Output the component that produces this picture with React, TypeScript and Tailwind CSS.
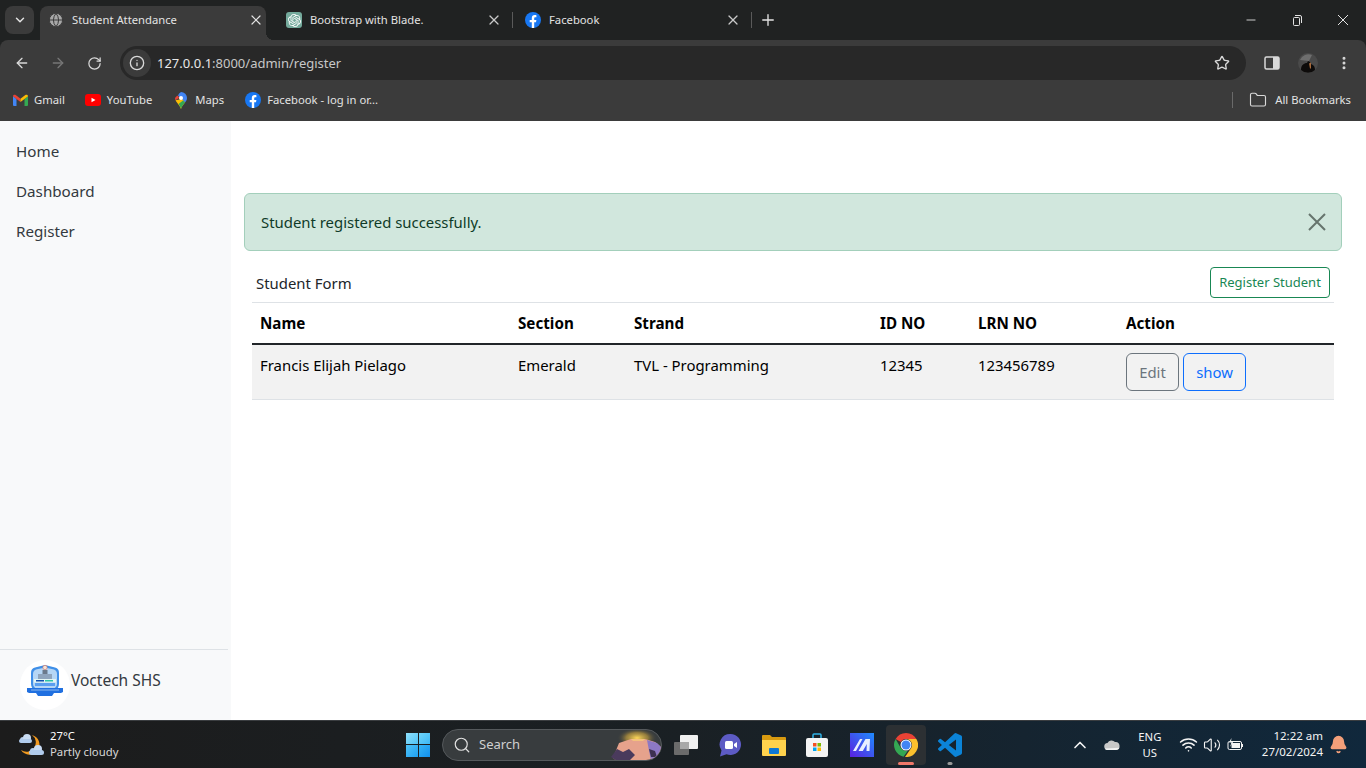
import { ArrowLeft, ArrowRight, RotateCw, Info, Star, X, Plus, ChevronDown, Minus, Search, Folder, ChevronUp, Volume2, Bell, Globe, EllipsisVertical, Wifi } from 'lucide-react';
import { SiOpenai } from 'react-icons/si';

const FONT = "font-['Noto_Sans',sans-serif]";

const FacebookIcon = () => (
  <svg width="16" height="16" viewBox="0 0 16 16" className="shrink-0">
    <circle cx="8" cy="8" r="8" fill="#1877f2" />
    <path d="M11 10.2l.4-2.3H9.2V6.400c0-.7.3-1.200 1.200-1.200h1V3.200S10.500 3 9.700 3C7.900 3 6.800 4.100 6.800 6.100v1.800H4.700v2.300h2.100V16h2.400v-5.800z" fill="#fff" />
  </svg>
);

const GptIcon = () => (
  <span className="flex h-4 w-4 shrink-0 items-center justify-center rounded-[3px] bg-[#74aa9c] text-white">
    <SiOpenai size={13} />
  </span>
);

const GmailIcon = () => (
  <svg width="15" height="12" viewBox="0 0 15 12" className="shrink-0">
    <path d="M0 2v9a1 1 0 0 0 1 1h2.500V5z" fill="#4285f4" />
    <path d="M15 2v9a1 1 0 0 1-1 1h-2.500V5z" fill="#34a853" />
    <path d="M0 2.200 3.500 5 7.500 8V4.800L3 1.200C1.600.2 0 .8 0 2.200z" fill="#ea4335" />
    <path d="M15 2.200 11.500 5 7.500 8V4.800L12 1.200c1.400-1 3-.4 3 1z" fill="#fbbc04" />
  </svg>
);

const YoutubeIcon = () => (
  <svg width="16" height="12" viewBox="0 0 16 12" className="shrink-0">
    <rect width="16" height="12" rx="3" fill="#f00" />
    <path d="M6.500 3.700v4.600L10.500 6z" fill="#fff" />
  </svg>
);

const MapsIcon = () => (
  <svg width="12" height="17" viewBox="0 0 12 17" className="shrink-0">
    <path d="M6 0a6 6 0 0 1 6 6c0 2-1 3.300-2 4.600L3 3.500A6 6 0 0 1 6 0z" fill="#4285f4" />
    <path d="M3 3.500A5.800 5.800 0 0 0 0 6c0 .8.200 1.600.500 2.200L4 6z" fill="#ea4335" />
    <path d="M.5 8.200C1.500 10.500 4.500 13 6 17c.7-2.500 2.500-4.500 4-6.400L7 7z" fill="#fbbc04" />
    <path d="M3.500 12C4.500 13.400 5.500 15 6 17c.7-2.500 2.500-4.500 4-6.400L8 8.500z" fill="#34a853" />
    <circle cx="6" cy="6" r="2" fill="#fff" />
  </svg>
);

const Tab = ({ icon, title }: { icon: React.ReactNode; title: string }) => (
  <div className="mb-[6px] flex h-7 w-[216px] items-center text-[11.25px] text-[#e3e3e3]">
    {icon}
    <span className="ml-2 flex-1 truncate">{title}</span>
    <X size={16} strokeWidth={1.800} className="text-[#c9c9c9]" />
  </div>
);

const Bookmark = ({ icon, label, className }: { icon: React.ReactNode; label: string; className: string }) => (
  <div className={`flex items-center ${className}`}>
    {icon}
    <span className="text-[11.25px] text-[#e3e3e3]">{label}</span>
  </div>
);

const BrowserChrome = () => (
  <header className="shrink-0 bg-[#202222]">
    <div className="flex h-10 items-end pl-[5px]">
      <div className="mb-[6px] flex h-7 w-[29px] items-center justify-center rounded-lg bg-[#3b3b3b]">
        <ChevronDown size={14} strokeWidth={2.500} className="text-[#e3e3e3]" />
      </div>
      <div className="relative ml-[6px] flex h-[34px] w-[226px] items-center rounded-t-lg bg-[#3b3b3b] pb-[6px] pl-2 pr-[2px] text-[11.25px] text-[#e3e3e3]">
        <Globe size={16} fill="#a8a8a8" stroke="#3b3b3b" strokeWidth={1.500} className="shrink-0" />
        <span className="ml-2 flex-1 truncate">Student Attendance</span>
        <X size={16} strokeWidth={1.800} className="text-[#e3e3e3]" />
        <span className="absolute bottom-0 right-[-8px] h-2 w-2 bg-[radial-gradient(circle_at_100%_0,transparent_8px,#3b3b3b_8px)]" />
      </div>
      <div className="ml-5">
        <Tab icon={<GptIcon />} title="Bootstrap with Blade." />
      </div>
      <div className="mb-[12px] ml-[10px] h-[16px] border-l border-[#5a5a5a]" />
      <div className="ml-[12px]">
        <Tab icon={<FacebookIcon />} title="Facebook" />
      </div>
      <div className="mb-[12px] ml-[10px] h-[16px] border-l border-[#5a5a5a]" />
      <div className="mb-[11px] ml-[7px]">
        <Plus size={18} strokeWidth={1.800} className="text-[#e3e3e3]" />
      </div>
      <div className="ml-auto flex h-full items-center text-[#e3e3e3]">
        <div className="flex w-[46px] justify-center"><Minus size={14} strokeWidth={1.500} /></div>
        <div className="flex w-[46px] justify-center">
          <svg width="11" height="12" viewBox="0 0 11 12" fill="none" stroke="currentColor">
            <rect x="1.500" y="3.500" width="6" height="8" rx="1" />
            <path d="M3 1.500h5a1.500 1.500 0 0 1 1.500 1.500v6" />
          </svg>
        </div>
        <div className="flex w-[46px] justify-center">
          <svg width="12" height="12" viewBox="0 0 12 12" stroke="currentColor"><path d="M1 1l10 10M11 1L1 11" /></svg>
        </div>
      </div>
    </div>
    <div className="flex h-[44px] items-center rounded-t-lg bg-[#3b3b3b] pt-[2px] text-[#d9d9d9]">
      <ArrowLeft size={16} strokeWidth={2} className="ml-[14px]" />
      <ArrowRight size={16} strokeWidth={2} className="ml-5 text-[#777]" />
      <RotateCw size={15} strokeWidth={2} className="ml-[21px]" />
      <div className="ml-[18px] flex h-[34px] w-[1126px] items-center rounded-full bg-[#282828] pl-[3px] pr-4">
        <div className="flex h-7 w-7 items-center justify-center rounded-full bg-[#3b3b3b]">
          <Info size={16} strokeWidth={2} />
        </div>
        <span className="ml-[6px] flex-1 pt-[1px] text-[13px] text-[#e8e8e8]">
          127.0.0.1<span className="text-[#c7c7c7]">:8000/admin/register</span>
        </span>
        <Star size={16} strokeWidth={2} />
      </div>
      <svg width="16" height="14" viewBox="0 0 16 14" className="ml-[18px]">
        <rect x="1" y="1" width="14" height="12" rx="1.500" fill="none" stroke="currentColor" strokeWidth="1.500" />
        <rect x="9" y="1" width="6" height="12" fill="currentColor" />
      </svg>
      <svg width="20" height="20" viewBox="0 0 20 20" className="ml-[18px]">
        <circle cx="10" cy="10" r="10" fill="#4a4a4a" />
        <path d="M2 7a9 9 0 0 1 12-5l-3 6z" fill="#6e6e6e" />
        <path d="M3 17c0-5 3-7 6-7l1-2 2 1 1 2c3 1 4 3 4 6a10 10 0 0 1-14 0z" fill="#0d0b0a" />
        <path d="M11 10.500l2-1v6h-1z" fill="#a66a3c" />
      </svg>
      <EllipsisVertical size={16} strokeWidth={2.500} className="ml-[18px]" />
    </div>
    <div className="flex h-[37px] items-center bg-[#3b3b3b] pb-[5px]">
      <Bookmark icon={<GmailIcon />} label="Gmail" className="ml-[13px] gap-[6px]" />
      <Bookmark icon={<YoutubeIcon />} label="YouTube" className="ml-5 gap-[6px]" />
      <Bookmark icon={<MapsIcon />} label="Maps" className="ml-[23px] gap-2" />
      <Bookmark icon={<FacebookIcon />} label="Facebook - log in or..." className="ml-[21px] gap-[6px]" />
      <div className="ml-auto h-4 border-l border-[#6a6a6a]" />
      <Folder size={18} strokeWidth={1.500} className="ml-4 text-[#d9d9d9]" />
      <span className="ml-2 mr-[15px] text-[11.25px] text-[#e3e3e3]">All Bookmarks</span>
    </div>
  </header>
);

const SchoolLogo = () => (
  <div className="flex h-[50px] w-[50px] items-start justify-center rounded-full bg-white pt-[4px]">
    <svg width="36" height="34" viewBox="0 0 36 34">
      <path d="M18 1 L28 3.500 C31 4.500 32 6 32 9 V20 C32 26 25 29 18 32 C11 29 4 26 4 20 V9 C4 6 5 4.500 8 3.500 Z" fill="#3f8fe8" />
      <path d="M18 3.500 L27 5.500 C29 6.500 30 7.500 30 10 V20 C30 24 24 27 18 29.500 C12 27 6 24 6 20 V10 C6 7.500 7 6.500 9 5.500 Z" fill="#b5d6f5" />
      <rect x="15.500" y="6" width="5" height="10" fill="#6b7a8c" />
      <rect x="11" y="10" width="14" height="6" fill="#8fa5bd" />
      <circle cx="18" cy="3.500" r="2.200" fill="#f3e3d6" stroke="#d06a5a" strokeWidth=".6" />
      <rect x="7" y="15" width="22" height="3.500" fill="#e4f7f4" />
      <rect x="9" y="16" width="8" height="1.500" fill="#0f4fb0" />
      <rect x="18" y="16" width="8" height="1.500" fill="#2ec4a8" />
      <rect x="8" y="19" width="20" height="3" fill="#5b9ff0" />
      <path d="M0 24h36v4l-2 1h-7l-2 3H11l-2-3H2l-2-1z" fill="#2070e0" />
      <path d="M4 26h28" stroke="#a8cdf2" strokeWidth=".8" />
    </svg>
  </div>
);

const Sidebar = () => (
  <aside className="flex w-[231px] shrink-0 flex-col bg-[#f8f9fa] text-[#343a40]">
    <nav className="flex flex-1 flex-col pt-[10px]">
      {['Home', 'Dashboard', 'Register'].map((item) => (
        <a key={item} className="flex h-10 items-center pl-4 text-[15.2px]">{item}</a>
      ))}
    </nav>
    <div className="mr-[3px] flex h-[71px] items-center border-t border-[#dee2e6] pl-5">
      <SchoolLogo />
      <span className="ml-[1px] mb-2 text-[15.500px]">Voctech SHS</span>
    </div>
  </aside>
);

const MainContent = () => (
  <main className="flex-1 pl-[13px] pr-6 pt-[72px] text-[#212529]">
    <div className="flex h-[58px] items-center justify-between rounded-md border border-[#a3cfbb] bg-[#d1e7dd] pl-4 pr-[15px] text-[14.900px] text-[#0f3b28]">
      <span>Student registered successfully.</span>
      <svg width="18" height="18" viewBox="0 0 18 18" stroke="#66746d" strokeWidth="2"><path d="M1 1l16 16M17 1L1 17" /></svg>
    </div>
    <div className="mx-2 mt-4">
      <div className="flex h-[35px] items-center justify-between pb-1 pl-1 pr-1 text-[14.900px]">
        <span className="pt-[2px]">Student Form</span>
        <button className="h-[31px] w-[120px] rounded border border-[#198754] pt-[1px] text-[13px] text-[#198754]">Register Student</button>
      </div>
      <table className="w-full table-fixed border-collapse border-t border-[#dee2e6] text-left text-[14.900px] text-black">
        <thead>
          <tr className="h-[41px] border-b-2 border-[#212529] text-[15.200px] font-bold">
            <th className="w-[258px] pl-2 pt-[2px]">Name</th>
            <th className="w-[116px] pl-2 pt-[2px]">Section</th>
            <th className="w-[246px] pl-2 pt-[2px]">Strand</th>
            <th className="w-[98px] pl-2 pt-[2px]">ID NO</th>
            <th className="w-[148px] pl-2 pt-[2px]">LRN NO</th>
            <th className="pl-2 pt-[2px]">Action</th>
          </tr>
        </thead>
        <tbody>
          <tr className="h-[56px] border-b border-[#dee2e6] bg-[#f2f2f2] align-top">
            <td className="pl-2 pt-[9px]">Francis Elijah Pielago</td>
            <td className="pl-2 pt-[9px]">Emerald</td>
            <td className="pl-2 pt-[9px]">TVL - Programming</td>
            <td className="pl-2 pt-[9px]">12345</td>
            <td className="pl-2 pt-[9px]">123456789</td>
            <td className="pl-2 pt-2">
              <div className="flex gap-1">
                <button className="h-[38px] w-[53px] rounded-md border border-[#6c757d] pt-[2px] text-[#6c757d]">Edit</button>
                <button className="h-[38px] w-[63px] rounded-md border border-[#0d6efd] pt-[2px] text-[#0d6efd]">show</button>
              </div>
            </td>
          </tr>
        </tbody>
      </table>
    </div>
  </main>
);

const Taskbar = () => (
  <footer className="flex h-12 shrink-0 items-center border-t border-[#3a3d40] bg-[linear-gradient(90deg,#1c1c1c_0%,#1a2024_50%,#10283c_100%)] text-white">
    <div className="flex w-[406px] shrink-0 items-center pl-[18px]">
      <svg width="26" height="24" viewBox="0 0 26 24">
        <path d="M14 2A10 10 0 1 1 3 17 A9 9 0 0 0 14 2z" fill="#f29a1f" />
        <circle cx="5" cy="7" r="3" fill="#b8d0ee" />
        <circle cx="9" cy="5" r="4" fill="#c9dcf3" />
        <rect x="1" y="6" width="13" height="4" rx="2" fill="#b0cbec" />
        <circle cx="15" cy="18" r="3" fill="#b8d0ee" />
        <circle cx="20" cy="16" r="4" fill="#c9dcf3" />
        <rect x="11" y="17" width="15" height="5" rx="2.500" fill="#b0cbec" />
      </svg>
      <div className="ml-[6px] flex flex-col pb-[2px] text-[11.300px] leading-[16px]">
        <span>27°C</span>
        <span className="text-[#d8d8d8]">Partly cloudy</span>
      </div>
    </div>
    <div className="grid h-6 w-6 grid-cols-2 gap-[1px]">
      <span className="bg-[linear-gradient(135deg,#8fe0fb,#4fc3f7)]" /><span className="bg-[linear-gradient(135deg,#6fd4fa,#3cb8f6)]" />
      <span className="bg-[linear-gradient(135deg,#4fc3f7,#1fa0f2)]" /><span className="bg-[linear-gradient(135deg,#35b4f5,#1290ee)]" />
    </div>
    <div className="ml-3 flex h-8 w-[220px] items-center overflow-hidden rounded-full border border-[#55595c] bg-[#383c3e] pl-[10px]">
      <Search size={18} strokeWidth={1.600} className="text-[#e0e0e0]" />
      <span className="ml-2 flex-1 text-[13px] text-[#d0d0d0]">Search</span>
      <svg width="50" height="32" viewBox="0 0 50 32" className="shrink-0">
        <defs>
          <radialGradient id="glow" cx="50%" cy="50%" r="50%">
            <stop offset="0%" stopColor="#ffd85a" />
            <stop offset="55%" stopColor="#a88a3c" stopOpacity=".8" />
            <stop offset="100%" stopColor="#383c3e" stopOpacity="0" />
          </radialGradient>
        </defs>
        <ellipse cx="26" cy="9" rx="20" ry="10" fill="url(#glow)" />
        <path d="M2 29 8 14 20 10 34 10 44 13 50 18V32H6z" fill="#e6a28c" />
        <path d="M20 10h14l-2 2H22z" fill="#f3c27c" />
        <path d="M36 11 46 14 50 18V32H40z" fill="#8d78c4" />
        <path d="M0 28 6 20 12 23 18 20 24 26 18 32H6z" fill="#4a3a5c" />
        <path d="M38 20 44 22 46 28H40z" fill="#3d3050" />
      </svg>
    </div>
    <div className="ml-[12px] flex items-center">
      <svg width="24" height="20" viewBox="0 0 24 20">
        <rect x="0" y="7" width="15" height="13" rx="1" fill="#6b6b6b" />
        <rect x="6" y="0" width="18" height="14" rx="1" fill="#f0f0f0" />
        <rect x="6" y="7" width="9" height="7" fill="#a8a8a8" />
      </svg>
      <svg width="24" height="24" viewBox="0 0 24 24" className="ml-[20px]">
        <path d="M12.500 1a10.500 10.500 0 1 1-4 20.200L2 23.500l1.500-6A10.500 10.500 0 0 1 12.500 1z" fill="#5d5bc4" />
        <rect x="7" y="8" width="8" height="8" rx="1.500" fill="#fff" />
        <path d="M16 11l3-2v6l-3-2z" fill="#fff" />
      </svg>
      <svg width="24" height="22" viewBox="0 0 24 22" className="ml-[20px]">
        <path d="M0 2a1 1 0 0 1 1-1h7l2 2h13a1 1 0 0 1 1 1v5H0z" fill="#d89a10" />
        <path d="M0 6h24v15a1 1 0 0 1-1 1H1a1 1 0 0 1-1-1z" fill="#ffd24d" />
        <rect x="7" y="14" width="10" height="6" rx="1" fill="#0e78d4" />
      </svg>
      <svg width="22" height="24" viewBox="0 0 22 24" className="ml-5">
        <path d="M7 6V2a1 1 0 0 1 1-1h6a1 1 0 0 1 1 1v4" fill="none" stroke="#30b4e8" strokeWidth="1.500" />
        <rect x="0" y="5" width="22" height="19" rx="2" fill="#f4f4f4" />
        <rect x="7" y="10" width="3.500" height="3.500" fill="#f25022" />
        <rect x="11.500" y="10" width="3.500" height="3.500" fill="#7fba00" />
        <rect x="7" y="14.500" width="3.500" height="3.500" fill="#00a4ef" />
        <rect x="11.500" y="14.500" width="3.500" height="3.500" fill="#ffb900" />
      </svg>
      <svg width="24" height="24" viewBox="0 0 24 24" className="ml-[22px]">
        <defs>
          <linearGradient id="ma" x1="0" y1="1" x2="1" y2="0">
            <stop offset="0%" stopColor="#5a20e0" />
            <stop offset="100%" stopColor="#1f8cff" />
          </linearGradient>
        </defs>
        <rect width="24" height="24" fill="url(#ma)" />
        <path d="M3 18 10 6h2.500L6 18zM8.500 18 15.500 6H20l-.5 12H16.500l.3-7-4 7z" fill="#e8f0ff" />
      </svg>
    </div>
    <div className="relative ml-3 flex h-10 w-10 items-center justify-center rounded bg-[#2c3033]">
      <svg width="24" height="24" viewBox="0 0 24 24">
        <path d="M12 0a12 12 0 0 1 10.390 6H12a6 6 0 0 0-5.200 3L1.600 6A12 12 0 0 1 12 0z" fill="#ea4335" />
        <path d="M1.600 6l5.200 9a6 6 0 0 0 7 2.700L9.500 23.700A12 12 0 0 1 1.600 6z" fill="#34a853" />
        <path d="M22.390 6H12a6 6 0 0 1 5.200 9L11 24A12 12 0 0 0 22.390 6z" fill="#fbc02d" />
        <circle cx="12" cy="12" r="5.500" fill="#fff" />
        <circle cx="12" cy="12" r="4.500" fill="#4285f4" />
      </svg>
      <span className="absolute bottom-0 left-1/2 h-[3px] w-4 -translate-x-1/2 rounded-full bg-[#f0786a]" />
    </div>
    <div className="relative ml-3 flex h-10 w-6 items-center justify-center">
      <svg width="24" height="24" viewBox="0 0 24 24">
        <path d="M23.150 2.587L18.210.21a1.494 1.494 0 0 0-1.705.29l-9.460 8.630-4.120-3.128a.999.999 0 0 0-1.276.057L.327 7.261A1 1 0 0 0 .326 8.740L3.899 12 .326 15.260a1 1 0 0 0 .001 1.479L1.650 17.940a.999.999 0 0 0 1.276.057l4.120-3.128 9.460 8.630a1.492 1.492 0 0 0 1.704.29l4.942-2.377A1.500 1.500 0 0 0 24 20.060V3.939a1.500 1.500 0 0 0-.85-1.352zm-5.146 14.861L10.826 12l7.178-5.448v10.896z" fill="#0b84d8" />
      </svg>
      <span className="absolute bottom-0 left-1/2 h-[3px] w-[5px] -translate-x-1/2 rounded-full bg-[#999]" />
    </div>
    <div className="ml-auto flex items-center text-[#f4f4f4]">
      <ChevronUp size={20} strokeWidth={2} />
      <svg width="16" height="11" viewBox="0 0 16 11" className="ml-[14px]">
        <path d="M4 11a3.500 3.500 0 0 1-.5-7A4.500 4.500 0 0 1 11 3a4 4 0 0 1 1 8z" fill="#c8c8c8" />
        <path d="M1 9.500c.5 1 1.500 1.500 3 1.500h8a4 4 0 0 0 3.600-2.200z" fill="#f2f2f2" />
      </svg>
      <div className="ml-[15px] flex w-[30px] flex-col items-center text-[11.300px] leading-[16px]">
        <span>ENG</span>
        <span>US</span>
      </div>
      <Wifi size={19} strokeWidth={2} className="ml-[14px]" />
      <Volume2 size={18} strokeWidth={1.500} className="ml-[5px]" />
      <svg width="17" height="13" viewBox="0 0 17 13" className="ml-[6px]" fill="none" stroke="currentColor">
        <rect x="1" y="3.500" width="13.500" height="8" rx="1.500" />
        <rect x="5" y="5.500" width="7.500" height="4" fill="currentColor" />
        <path d="M15.500 6v3" />
        <path d="M4.500 0 2 4.500h2.500L3 9l3.500-5.500H4z" fill="currentColor" stroke="none" />
      </svg>
      <div className="ml-[18px] flex flex-col items-end pb-[2px] text-[11.500px] leading-[16px]">
        <span>12:22 am</span>
        <span>27/02/2024</span>
      </div>
      <Bell size={19} fill="#f4a07a" stroke="#f4a07a" className="ml-[6px] mr-[18px]" />
    </div>
  </footer>
);

const App = () => {
  return (
    <div className={`flex h-[768px] w-[1366px] flex-col overflow-hidden bg-white ${FONT}`}>
      <BrowserChrome />
      <div className="flex min-h-0 flex-1">
        <Sidebar />
        <MainContent />
      </div>
      <Taskbar />
    </div>
  );
};

export default App;
